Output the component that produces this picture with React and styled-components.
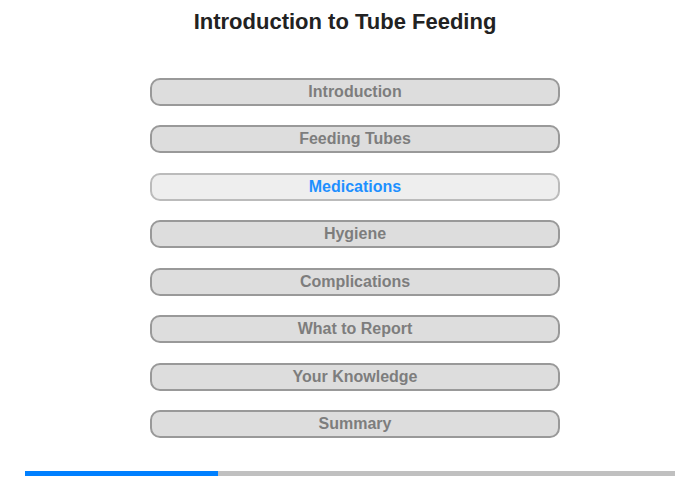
import React from "react";
import styled, { createGlobalStyle } from "styled-components";

const Global = createGlobalStyle`
  html, body { margin: 0; padding: 0; background: #fff; }
  body { font-family: "Liberation Sans", Arial, sans-serif; }
`;

const Page = styled.div`
  width: 700px;
  height: 480px;
  display: flex;
  flex-direction: column;
  box-sizing: border-box;
`;

const Title = styled.h1`
  margin: 9px 0 0 0;
  font-size: 22px;
  line-height: 25px;
  font-weight: bold;
  color: #222;
  text-align: center;
  padding-right: 10px;
`;

const Menu = styled.nav`
  margin-top: 44px;
  padding-left: 150px;
  display: flex;
  flex-direction: column;
  gap: 19.43px;
`;

const Item = styled.button`
  box-sizing: border-box;
  flex: 0 0 28px;
  width: 410px;
  height: 28px;
  padding: 0;
  border: 2px solid ${(p) => (p.$active ? "#bbbbbb" : "#999999")};
  border-radius: 10px;
  background: ${(p) => (p.$active ? "#eeeeee" : "#dddddd")};
  color: ${(p) => (p.$active ? "#1e90ff" : "#7d7d7d")};
  font-family: "Liberation Sans", Arial, sans-serif;
  font-size: 16px;
  font-weight: bold;
  line-height: 24px;
  text-align: center;
  cursor: pointer;
`;

const Progress = styled.div`
  margin: auto 0 4px 25px;
  width: 650px;
  height: 5px;
  background: #c0c0c0;
  display: flex;
`;

const Fill = styled.div`
  height: 100%;
  background: #0080ff;
`;

const items = [
  "Introduction",
  "Feeding Tubes",
  "Medications",
  "Hygiene",
  "Complications",
  "What to Report",
  "Your Knowledge",
  "Summary",
];

export default function App() {
  return (
    <Page>
      <Global />
      <Title>Introduction to Tube Feeding</Title>
      <Menu>
        {items.map((t) => (
          <Item key={t} $active={t === "Medications"}>
            {t}
          </Item>
        ))}
      </Menu>
      <Progress>
        <Fill style={{ width: "193px" }} />
      </Progress>
    </Page>
  );
}
